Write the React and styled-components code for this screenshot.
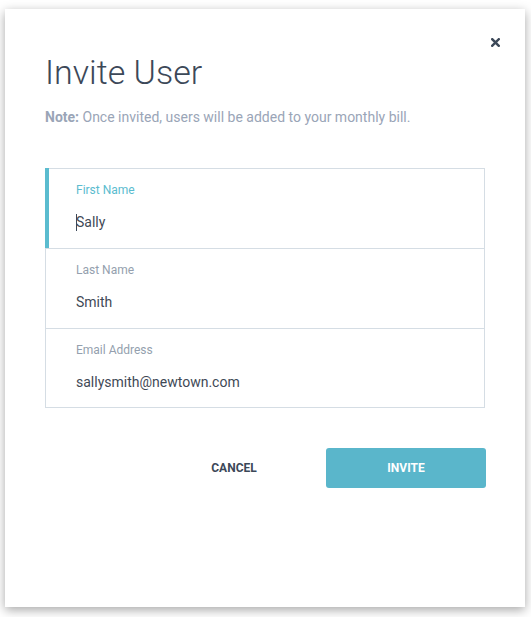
import React from 'react';
import styled, { createGlobalStyle } from 'styled-components';

const GlobalStyle = createGlobalStyle`
  html, body {
    margin: 0;
    padding: 0;
    background: #ffffff;
  }
  body {
    font-family: Roboto, "Liberation Sans", Arial, sans-serif;
    -webkit-font-smoothing: antialiased;
  }
`;

const fields = [
  { id: 'first', label: 'First Name', value: 'Sally', active: true },
  { id: 'last', label: 'Last Name', value: 'Smith' },
  { id: 'email', label: 'Email Address', value: 'sallysmith@newtown.com' },
];

export default function App() {
  return (
    <>
      <GlobalStyle />
      <Page>
        <Modal>
          <CloseButton aria-label="Close">
            <svg width="9" height="9" viewBox="0 0 9 9">
              <path d="M1.2 1.2 L7.8 7.8 M7.8 1.2 L1.2 7.8" stroke="#3c4858" strokeWidth="2.4" strokeLinecap="square" />
            </svg>
          </CloseButton>

          <Title>Invite User</Title>
          <Note>
            <strong>Note:</strong> Once invited, users will be added to your monthly bill.
          </Note>

          <FieldGroup>
            {fields.map((f) => (
              <Field key={f.id} $active={f.active}>
                <Label $active={f.active}>{f.label}</Label>
                <Value>
                  {f.active && <Caret />}
                  {f.value}
                </Value>
              </Field>
            ))}
          </FieldGroup>

          <Actions>
            <TextButton>CANCEL</TextButton>
            <PrimaryButton>INVITE</PrimaryButton>
          </Actions>
        </Modal>
      </Page>
    </>
  );
}

const Page = styled.div`
  padding: 9px 0 0 5px;
  min-height: 617px;
  box-sizing: border-box;
  background: #ffffff;
`;

const Modal = styled.div`
  position: relative;
  width: 520px;
  height: 598px;
  box-sizing: border-box;
  padding: 43px 40px 0 40px;
  background: #ffffff;
  box-shadow: 0 3px 10px rgba(0, 0, 0, 0.35);
`;

const CloseButton = styled.button`
  position: absolute;
  top: 23px;
  right: 20px;
  width: 20px;
  height: 20px;
  padding: 0;
  border: none;
  background: none;
  display: flex;
  align-items: center;
  justify-content: center;
  cursor: pointer;
`;

const Title = styled.h1`
  margin: 0;
  font-size: 34px;
  line-height: 40px;
  font-weight: 300;
  color: #3c4858;
`;

const Note = styled.p`
  margin: 15px 0 0 0;
  font-size: 14px;
  line-height: 20px;
  color: #9aa5b7;

  strong {
    font-weight: 700;
  }
`;

const FieldGroup = styled.div`
  margin-top: 41px;
  border: 1px solid #d5dde4;
`;

const Field = styled.div`
  position: relative;
  height: 80px;
  box-sizing: border-box;
  padding: 13px 30px 0 30px;
  border-top: 1px solid #d5dde4;

  &:first-child {
    height: 79px;
    border-top: none;
  }

  &:last-child {
    height: 79px;
  }

  ${({ $active }) =>
    $active &&
    `
    &::before {
      content: '';
      position: absolute;
      left: -1px;
      top: -1px;
      bottom: 0;
      width: 4px;
      background: #5bbccf;
    }
  `}
`;

const Label = styled.div`
  font-size: 12px;
  line-height: 16px;
  color: ${({ $active }) => ($active ? '#5bbccf' : '#949fae')};
`;

const Value = styled.div`
  margin-top: 14px;
  font-size: 14px;
  line-height: 20px;
  color: #3f4956;
  display: flex;
  align-items: center;
`;

const Caret = styled.span`
  display: inline-block;
  width: 1px;
  height: 17px;
  margin-right: -1px;
  background: #3c4858;
`;

const Actions = styled.div`
  margin-top: 40px;
  display: flex;
  justify-content: flex-end;
  gap: 12px;
  margin-right: -1px;
`;

const TextButton = styled.button`
  width: 160px;
  height: 40px;
  border: none;
  background: none;
  font-family: inherit;
  font-size: 12px;
  font-weight: 700;
  color: #3c4858;
  cursor: pointer;
`;

const PrimaryButton = styled.button`
  width: 160px;
  height: 40px;
  border: none;
  border-radius: 3px;
  background: #5ab6cb;
  font-family: inherit;
  font-size: 12px;
  font-weight: 700;
  color: #ffffff;
  cursor: pointer;
`;
